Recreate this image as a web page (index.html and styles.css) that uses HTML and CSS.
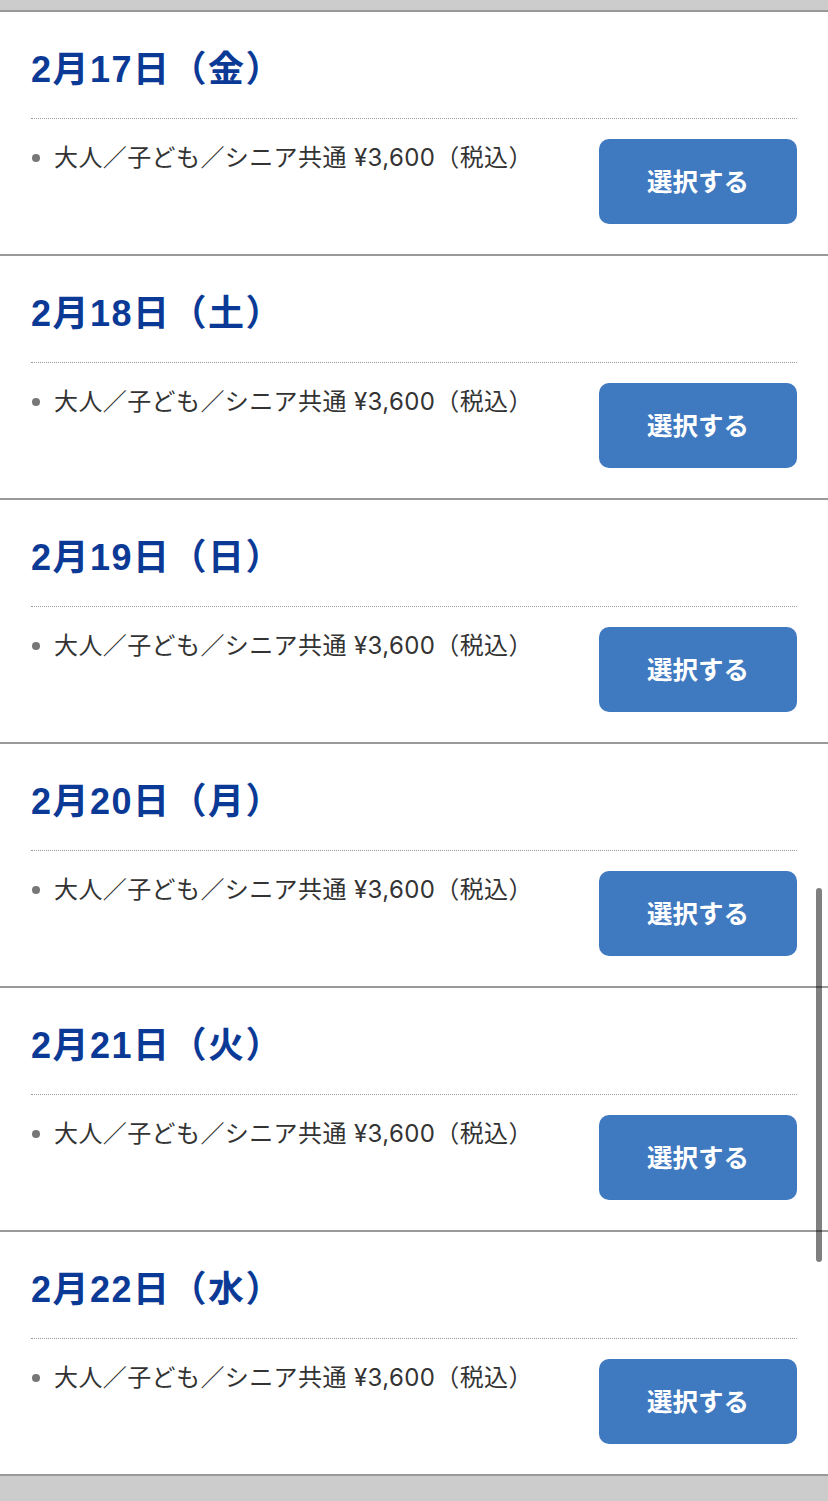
FILE: index.html
```html
<!DOCTYPE html>
<html lang="ja">
<head>
  <meta charset="UTF-8">
  <meta name="viewport" content="width=device-width, initial-scale=1.0">
  <title>日付を選択</title>
  <link rel="stylesheet" href="styles.css">
</head>
<body>
  <div class="days">
    <section class="day">
      <h2 class="day-title">2月17日（金）</h2>
      <div class="day-row">
        <ul class="prices">
          <li>大人／子ども／シニア共通 ¥3,600（税込）</li>
        </ul>
        <button class="select-btn">選択する</button>
      </div>
    </section>
    <section class="day">
      <h2 class="day-title">2月18日（土）</h2>
      <div class="day-row">
        <ul class="prices">
          <li>大人／子ども／シニア共通 ¥3,600（税込）</li>
        </ul>
        <button class="select-btn">選択する</button>
      </div>
    </section>
    <section class="day">
      <h2 class="day-title">2月19日（日）</h2>
      <div class="day-row">
        <ul class="prices">
          <li>大人／子ども／シニア共通 ¥3,600（税込）</li>
        </ul>
        <button class="select-btn">選択する</button>
      </div>
    </section>
    <section class="day">
      <h2 class="day-title">2月20日（月）</h2>
      <div class="day-row">
        <ul class="prices">
          <li>大人／子ども／シニア共通 ¥3,600（税込）</li>
        </ul>
        <button class="select-btn">選択する</button>
      </div>
    </section>
    <section class="day">
      <h2 class="day-title">2月21日（火）</h2>
      <div class="day-row">
        <ul class="prices">
          <li>大人／子ども／シニア共通 ¥3,600（税込）</li>
        </ul>
        <button class="select-btn">選択する</button>
      </div>
    </section>
    <section class="day">
      <h2 class="day-title">2月22日（水）</h2>
      <div class="day-row">
        <ul class="prices">
          <li>大人／子ども／シニア共通 ¥3,600（税込）</li>
        </ul>
        <button class="select-btn">選択する</button>
      </div>
    </section>
  </div>
  <div class="scrollbar"></div>
</body>
</html>
```

FILE: styles.css
```css
body {
  margin: 0;
  padding: 0;
  background-color: #cccccc;
  font-family: "Liberation Sans", "Noto Sans CJK JP", sans-serif;
  color: #333333;
}
.days {
  margin-top: 10px;
  border-bottom: 2px solid #999999;
}
.day {
  background-color: #ffffff;
  border-top: 2px solid #999999;
  padding: 0 31px 30px 31px;
}
.day-title {
  margin: 0;
  padding: 40px 0 30px 0;
  font-size: 36px;
  line-height: 36px;
  font-weight: bold;
  letter-spacing: 1.5px;
  color: #0b3a96;
  border-bottom: 1px dotted #999999;
}
.day-row {
  display: flex;
  justify-content: space-between;
  align-items: flex-start;
  margin-top: 20px;
}
.prices {
  list-style: none;
  margin: 0;
  padding: 2px 0 0 0;
}
.prices li {
  position: relative;
  padding-left: 23px;
  font-family: Inter, "Noto Sans CJK JP", sans-serif;
  font-size: 24px;
  line-height: 34px;
  letter-spacing: 0.4px;
  color: #333333;
}
.prices li::before {
  content: "";
  position: absolute;
  left: 1px;
  top: 13px;
  width: 8px;
  height: 8px;
  border-radius: 50%;
  background-color: #777777;
}
.select-btn {
  flex-shrink: 0;
  width: 198px;
  height: 85px;
  padding: 0 0 5px 0;
  border: none;
  border-radius: 10px;
  background-color: #3f79bf;
  color: #ffffff;
  font-family: "Noto Sans CJK JP", sans-serif;
  font-size: 25.5px;
  font-weight: bold;
}
.scrollbar {
  position: fixed;
  right: 6px;
  top: 888px;
  width: 6px;
  height: 374px;
  border-radius: 3px;
  background-color: rgba(0, 0, 0, 0.5);
}
```
